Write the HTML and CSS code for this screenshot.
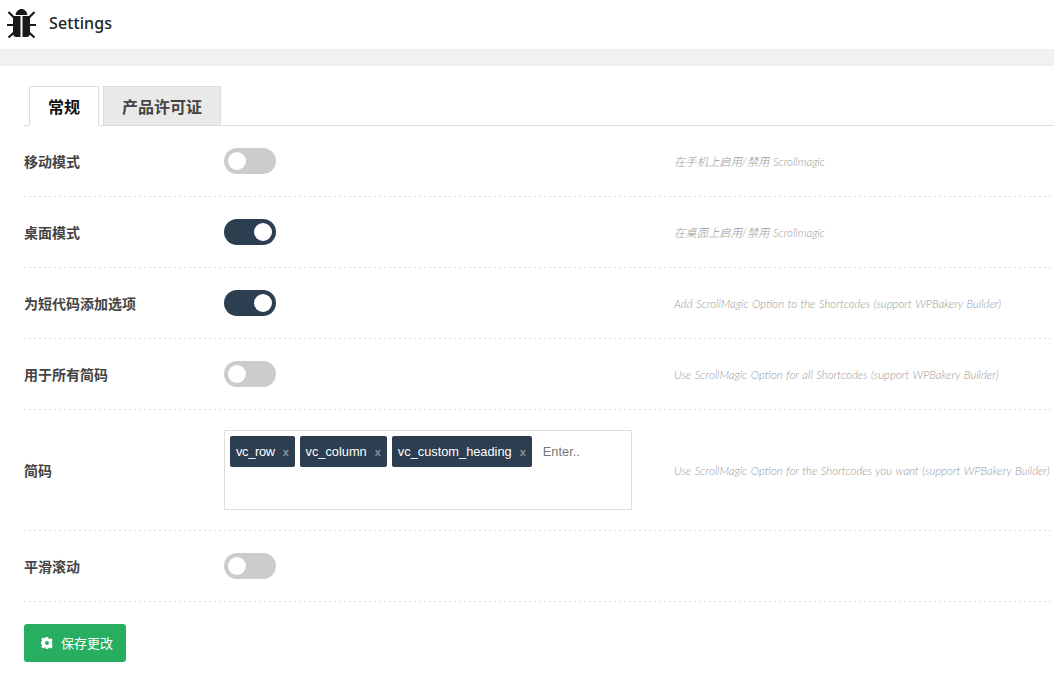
FILE: index.html
```html
<!DOCTYPE html>
<html lang="zh">
<head>
<meta charset="utf-8">
<title>Settings</title>
<link rel="stylesheet" href="styles.css">
</head>
<body>
<header class="topbar">
  <svg class="bug" viewBox="6 5 32 32" width="32" height="32" aria-hidden="true">
    <path d="M15.500 13C16 9.500 18.500 7 21.500 7s5.500 2.500 6 6z" fill="#1a1a1a"/>
    <path d="M13 14H20.500V35H16.500A3.500 4 0 0 1 13 31zM22.500 14H30V31A3.500 4 0 0 1 26.500 35H22.500z" fill="#1a1a1a"/>
    <path d="M8.500 10 14 15.500M34.500 10 29 15.500M7 23H14M36 23H29M8.500 35.500 14 30.500M34.500 35.500 29 30.500" stroke="#1a1a1a" stroke-width="2.200" fill="none"/>
  </svg>
  <h1 class="title">Settings</h1>
</header>
<div class="band"></div>
<main class="content">
  <nav class="tabs">
    <a class="tab tab-active">常规</a>
    <a class="tab">产品许可证</a>
  </nav>
  <section class="row">
    <div class="label">移动模式</div>
    <div class="control"><span class="switch"></span></div>
    <div class="desc">在手机上启用/禁用 Scrollmagic</div>
  </section>
  <section class="row">
    <div class="label">桌面模式</div>
    <div class="control"><span class="switch switch-on"></span></div>
    <div class="desc">在桌面上启用/禁用 Scrollmagic</div>
  </section>
  <section class="row">
    <div class="label">为短代码添加选项</div>
    <div class="control"><span class="switch switch-on"></span></div>
    <div class="desc">Add ScrollMagic Option to the Shortcodes (support WPBakery Builder)</div>
  </section>
  <section class="row">
    <div class="label">用于所有简码</div>
    <div class="control"><span class="switch"></span></div>
    <div class="desc">Use ScrollMagic Option for all Shortcodes (support WPBakery Builder)</div>
  </section>
  <section class="row row-tags">
    <div class="label">简码</div>
    <div class="control">
      <div class="tagbox">
        <span class="tag tag-short">vc_row<span class="tag-x">x</span></span>
        <span class="tag">vc_column<span class="tag-x">x</span></span>
        <span class="tag">vc_custom_heading<span class="tag-x">x</span></span>
        <span class="tag-input">Enter..</span>
      </div>
    </div>
    <div class="desc">Use ScrollMagic Option for the Shortcodes you want (support WPBakery Builder)</div>
  </section>
  <section class="row">
    <div class="label">平滑滚动</div>
    <div class="control"><span class="switch"></span></div>
    <div class="desc"></div>
  </section>
  <button class="save" type="button">
    <svg class="gear" viewBox="0 0 24 24" width="12" height="12" aria-hidden="true">
      <path fill="#fff" fill-rule="evenodd" d="M9.500 0h5l.7 3.300 1.900.8 2.900-1.800 3.500 3.500-1.800 2.900.8 1.900 0 0V14.500l0 0-.8 1.900 1.800 2.900-3.500 3.500-2.900-1.800-1.900.8-.7 2.200h-5l-.7-2.200-1.900-.8-2.900 1.800L.500 19.300l1.800-2.900-.8-1.900L0 14.500V9.500l1.500-.4.800-1.900L.500 4.300 4 .8l2.900 1.500 1.900-.8zM12 8a4 4 0 1 0 0 8 4 4 0 0 0 0-8z"/>
    </svg>
    保存更改
  </button>
</main>
</body>
</html>
```
FILE: styles.css
```css
* { box-sizing: border-box; }
html, body { margin: 0; padding: 0; }
body {
  background: #fff;
  color: #333;
  font-family: "Open Sans", "Noto Sans CJK SC", sans-serif;
  height: 678px;
  overflow: hidden;
}
.topbar {
  height: 49px;
  display: flex;
  align-items: center;
  padding-left: 6px;
  gap: 11px;
}
.bug { display: block; margin-top: -3px; }
.title {
  margin: -3px 0 0;
  font: 500 16px "Noto Sans", sans-serif;
  letter-spacing: 0.1px;
  color: #222;
}
.band { height: 17px; background: #f1f1f1; }
.content { padding: 20px 0 0 24px; }
.tabs {
  display: flex;
  height: 40px;
  padding-left: 5px;
  gap: 4px;
  border-bottom: 1px solid #ddd;
}
.tab {
  height: 40px;
  padding: 0 18px;
  display: flex;
  align-items: center;
  font: 700 16px "Noto Sans CJK SC", sans-serif;
  color: #444;
  background: #e9e9e9;
  border: 1px solid #ddd;
}
.tab-active {
  color: #111;
  background: #fff;
  border-bottom-color: #fff;
}
.row {
  height: 71px;
  display: flex;
  align-items: center;
  padding-bottom: 1px;
  background: repeating-linear-gradient(90deg, #ddd 0 2px, transparent 2px 5px) left bottom / 100% 1px no-repeat;
}
.row-tags { height: 121px; }
.label {
  width: 200px;
  font: 700 14px "Noto Sans CJK SC", sans-serif;
  color: #444;
}
.control { width: 450px; display: flex; }
.desc {
  flex: 1;
  white-space: nowrap;
  font: italic 300 11.35px Lato, "Noto Sans CJK SC", sans-serif;
  word-spacing: 0.7px;
  color: #999;
}
.switch {
  display: block;
  width: 52px;
  height: 26px;
  border-radius: 13px;
  background: #ccc;
  padding: 4px;
}
.switch::before {
  content: "";
  display: block;
  width: 18px;
  height: 18px;
  border-radius: 50%;
  background: #fff;
}
.switch-on { background: #2c3e50; padding-left: 30px; }
.tagbox {
  width: 408px;
  height: 80px;
  border: 1px solid #ddd;
  padding: 5px;
  display: flex;
  align-items: flex-start;
  gap: 5px;
}
.tag {
  height: 31px;
  padding: 0 6px;
  background: #2c3e50;
  border-radius: 2px;
  color: #fff;
  font: 12.8px/31px "Liberation Sans", sans-serif;
  white-space: nowrap;
}
.tag-short { letter-spacing: -0.3px; }
.tag-x {
  margin-left: 8px;
  color: #8a939c;
  font-size: 11px;
  font-weight: 700;
}
.tag-input {
  margin-left: 6px;
  color: #777;
  font: 12.8px/31px "Liberation Sans", sans-serif;
}
.save {
  margin-top: 22px;
  width: 102px;
  height: 38px;
  border: 0;
  border-radius: 3px;
  background: #27ae60;
  color: #fff;
  display: flex;
  align-items: center;
  justify-content: center;
  gap: 8px;
  padding: 0 0 2px 4px;
  font: 13px "Noto Sans CJK SC", sans-serif;
}
.gear { display: block; margin-top: 2px; }
```
